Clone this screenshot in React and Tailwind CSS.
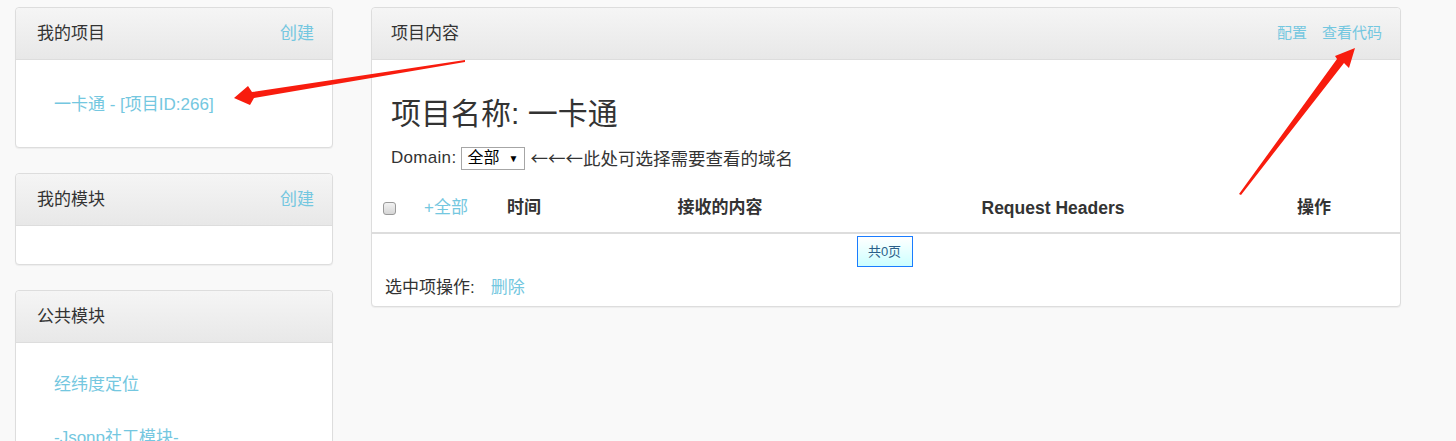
export default function App() {
  const font = { fontFamily: '"Liberation Sans", "Noto Sans CJK SC", sans-serif' }

  return (
    <div className="relative w-[1456px] h-[441px] overflow-hidden bg-[#f9f9f9] text-[#333]" style={font}>
      <div className="flex items-start pt-[7px]">
        {/* left column */}
        <div className="ml-[15px] w-[318px] flex flex-col gap-[25px]">
          <Panel title="我的项目" action="创建">
            <div className="h-[87px] pl-[38px] pt-[33px]">
              <a className="text-[17px] leading-[24px] text-[#74c7e0]">一卡通 - [项目ID:266]</a>
            </div>
          </Panel>
          <Panel title="我的模块" action="创建">
            <div className="h-[38px]" />
          </Panel>
          <Panel title="公共模块">
            <div className="h-[160px] pl-[38px] pt-[30px] flex flex-col gap-[29px]">
              <a className="text-[17px] leading-[24px] text-[#74c7e0]">经纬度定位</a>
              <a className="text-[17px] leading-[24px] text-[#74c7e0]">-Jsonp社工模块-</a>
            </div>
          </Panel>
        </div>

        {/* right column */}
        <div className="ml-[38px] w-[1030px] bg-white border border-[#ddd] rounded-[4px] shadow-[0_1px_1px_rgba(0,0,0,0.05)]">
          <div className="h-[52px] flex items-center justify-between pl-[19px] pr-[18px] border-b border-[#ddd] rounded-t-[4px] bg-gradient-to-b from-[#f5f5f5] to-[#e8e8e8]">
            <span className="text-[17px] text-[#333]">项目内容</span>
            <div className="flex gap-[15px] text-[15px] text-[#74c7e0]">
              <a>配置</a>
              <a>查看代码</a>
            </div>
          </div>
          <div className="pb-[6px]">
            <h1 className="mt-[36px] ml-[19px] text-[30px] leading-[36px] text-[#333]">项目名称: 一卡通</h1>
            <div className="mt-[14px] ml-[19px] flex items-center h-[24px] text-[17px]">
              <span className="tracking-[0.3px]">Domain:</span>
              <div className="ml-[5px] h-[23px] w-[64px] border border-[#a6a6a6] bg-white flex items-center justify-between pl-[5px] pr-[6px] text-black">
                <span className="text-[16px]">全部</span>
                <span className="text-[10px]">▼</span>
              </div>
              <span
                className="ml-[5px] text-[17.5px]"
                style={{ fontFamily: '"Noto Sans CJK SC", sans-serif' }}
              >
                ←←←此处可选择需要查看的域名
              </span>
            </div>
            <div className="mt-[14px] h-[50px] flex items-center border-b-2 border-[#ddd] text-[17px] font-bold">
              <div className="w-[34px] flex justify-center">
                <div className="w-[13px] h-[13px] rounded-[3px] border border-[#9a9a9a] bg-gradient-to-b from-[#f2f2f2] to-[#d6d6d6]" />
              </div>
              <div className="w-[80px] text-center font-normal text-[17px] text-[#74c7e0]">+全部</div>
              <div className="w-[76px] text-center">时间</div>
              <div className="w-[316px] text-center">接收的内容</div>
              <div className="w-[350px] text-center text-[17.5px]">Request Headers</div>
              <div className="flex-1 text-center">操作</div>
            </div>
            <div className="mt-[2px] flex justify-center">
              <div className="ml-[-3px] h-[31px] w-[56px] flex items-center justify-center border border-[#1a7cff] bg-gradient-to-b from-white to-[#ccffff] text-[13px] text-[#2a5f8a]">
                共0页
              </div>
            </div>
            <div className="mt-[9px] ml-[13px] h-[24px] flex items-center text-[17px]">
              <span>选中项操作:</span>
              <a className="ml-[16px] text-[#74c7e0]">删除</a>
            </div>
          </div>
        </div>
      </div>

      {/* annotation arrows */}
      <svg className="absolute left-0 top-0 pointer-events-none" width="1456" height="441">
        <polygon
          points="234,98 248,86 252,92 465,60 465,62 254,98 250,105"
          fill="#f81c0e"
        />
        <polygon
          points="1355,48 1349,68 1344,63 1241,195 1239,194 1337,59 1335,56"
          fill="#f81c0e"
        />
      </svg>
    </div>
  )
}

function Panel({ title, action, children }) {
  return (
    <div className="bg-white border border-[#ddd] rounded-[4px] shadow-[0_1px_1px_rgba(0,0,0,0.05)]">
      <div className="h-[52px] flex items-center justify-between pl-[21px] pr-[18px] border-b border-[#ddd] rounded-t-[4px] bg-gradient-to-b from-[#f5f5f5] to-[#e8e8e8]">
        <span className="text-[17px] text-[#333]">{title}</span>
        {action && <a className="text-[17px] text-[#74c7e0]">{action}</a>}
      </div>
      {children}
    </div>
  )
}
